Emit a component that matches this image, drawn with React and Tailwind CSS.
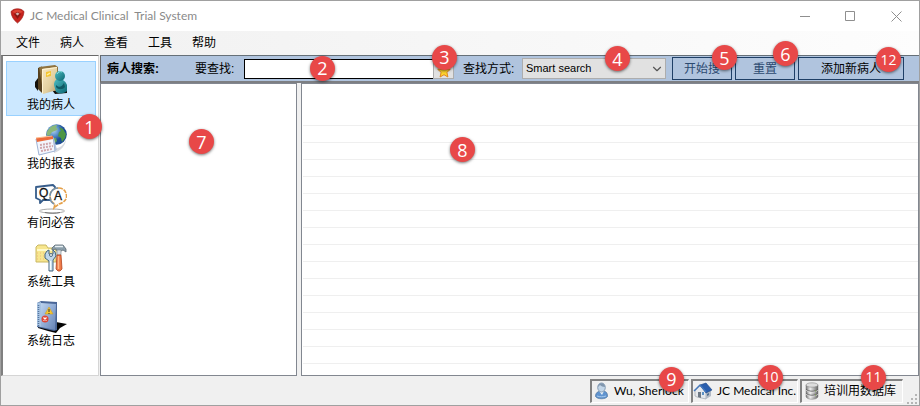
import React from 'react';
import { ChevronDown } from 'lucide-react';

const Badge = ({ n, className }) => (
    <span
        className={`absolute z-20 flex h-[25px] w-[25px] items-center justify-center rounded-full bg-[#e84848] font-['Open_Sans'] leading-none text-white shadow-[0_1px_3px_rgba(0,0,0,0.55)] pointer-events-none ${n > 9 ? 'text-sm' : 'text-lg'} ${className}`}
    >
        {n}
    </span>
);

const ShieldLogo = () => (
    <svg width="16" height="16" viewBox="0 0 16 16" aria-hidden="true">
        <path d="M2 3.500C4 1.500 6 .8 8.500.8S13 1.500 15 3.500c-.2 4.500-2.500 8.500-6.500 11.500C4.500 12 2.200 8 2 3.500z" fill="#c5221c" stroke="#9c1a15" strokeWidth=".7" />
        <path d="M3 4c2-1.800 3.500-2.300 5.500-2.300S12 2.200 14 4l-3 1-2.500-1L6 5z" fill="#dd4434" />
        <path d="m5 6 3.500-2L12 6l-3.500 5z" fill="#8c1813" />
        <path d="m6.500 5.800 2-1.200 2 1.200-2 1.600z" fill="#d3b5ae" />
    </svg>
);

const PatientsIcon = () => (
    <svg width="32" height="32" viewBox="0 0 32 32" aria-hidden="true">
        <defs>
            <linearGradient id="folder" x1="0" y1="0" x2="1" y2="1">
                <stop offset="0" stopColor="#f7e8c4" />
                <stop offset=".6" stopColor="#e2cf9f" />
                <stop offset="1" stopColor="#b39b6c" />
            </linearGradient>
            <linearGradient id="person" x1="0" y1="0" x2="1" y2="1">
                <stop offset="0" stopColor="#4dbcc2" />
                <stop offset="1" stopColor="#0b6672" />
            </linearGradient>
        </defs>
        <path d="M0 17 3 13v13l-3-4zM17 25l11-2 4 2v3l-12 1z" fill="#14110b" />
        <path d="M3 3 7 1.500V28l-4-4z" fill="#56401f" />
        <path d="M4 2 20 0l3 2v24H8z" fill="#8f733f" />
        <path d="m7 4 15-2v23L8 29z" fill="url(#folder)" />
        <path d="M7 4v24l1 1V5l14-2V2z" fill="#fff3d2" />
        <path d="m11 7 5-1v5l-5 1z" fill="#f4c431" />
        <path d="m12 10 3-2" stroke="#fff1a0" strokeWidth="1.500" />
        <path d="M19 20c0-4 2-6 5-6 4 0 7 3 8 6v6c-3 3-8 3-11 1z" fill="url(#person)" />
        <path d="M21 20c3 3 6 2 8-2l1 4c-2 3-7 3-9 0z" fill="#0f5864" />
        <circle cx="25" cy="11" r="5" fill="url(#person)" />
        <path d="M22 9c1-2 3-3 5-2" stroke="#93e2df" fill="none" />
    </svg>
);

const ReportsIcon = () => (
    <svg width="32" height="32" viewBox="0 0 32 32" aria-hidden="true">
        <defs>
            <radialGradient id="globe" cx=".35" cy=".3">
                <stop offset="0" stopColor="#b8d4ee" />
                <stop offset=".5" stopColor="#5c93cc" />
                <stop offset="1" stopColor="#1c4d94" />
            </radialGradient>
        </defs>
        <path d="M19 25c6-1 10-4 12-10 0 6-5 12-12 14z" fill="#d8dbe1" />
        <circle cx="21.500" cy="10.500" r="10.300" fill="url(#globe)" />
        <path d="M14 5c2-3 5-4 8-4l-1 3 2 1-3 2-3 1-2 3-3 1c-1-3 0-5 2-7z" fill="#8ab879" />
        <path d="m24 3 4 2 3 5-1 4-3 4-1-4-3-2 1-4 2-1z" fill="#4d9644" />
        <path d="M17 14h4l1 3-3 3z" fill="#64a357" />
        <path d="m3 17 16-3 3 12-18 5z" fill="#b6c5de" />
        <path d="m1 15 17-2 2 14-16 4z" fill="#f3f6fd" stroke="#9fb3d4" />
        <path d="m1 14 17-2v3L2 18z" fill="#ed6a3b" />
        <path d="m1 14 16-2" stroke="#ffbd8f" />
        <path d="m5 21 12-2M5 24l13-2M6 27l11-2" stroke="#d0a6ac" strokeWidth="2" strokeDasharray="2 1" />
    </svg>
);

const QaIcon = () => (
    <svg width="32" height="32" viewBox="0 0 32 32" aria-hidden="true">
        <ellipse cx="17" cy="28" rx="12.500" ry="2" fill="#fff" stroke="#a9a9a9" />
        <path d="M10 29.500c5 1 11 1 15 0" fill="none" stroke="#777" />
        <path d="m1 4 17-2 2 2-1 13H8l-3 3v-3l-4-2z" fill="#fff" stroke="#375d8b" strokeWidth="1.800" strokeLinejoin="round" />
        <path d="M24 5c4 0 7 3 7.500 7.500S28 20 24 21l-5 4 1-4c-3-1-5-5-5-8.500C15 8 19 5 24 5z" fill="#fff" stroke="#e5a14a" strokeWidth="1.600" strokeDasharray="4 1" />
        <path d="M15 13c0-5 4-8 8-8M15 14c0 3 2 6 4 7" fill="none" stroke="#7291ad" strokeWidth="1.500" />
        <text x="4" y="14" fontSize="12" fontFamily="Liberation Sans, sans-serif" fill="#111" stroke="#111" strokeWidth=".3">Q</text>
        <text x="19" y="17" fontSize="12" fontFamily="Liberation Sans, sans-serif" fill="#111" stroke="#111" strokeWidth=".3">A</text>
    </svg>
);

const ToolsIcon = () => (
    <svg width="32" height="32" viewBox="0 0 32 32" aria-hidden="true">
        <path d="m1 5 2-2h8l2 3h8v14H1z" fill="#f7e68e" stroke="#c9b763" />
        <path d="M2 7h18v2H2z" fill="#fffac9" />
        <path d="M2 11h17M2 14h10M2 17h9" stroke="#f0b77a" strokeDasharray="1 2" />
        <path d="m17 6 3-3h8l3 4v3l-3-2-2 1h-4l-1-2-4 1z" fill="#8b9eaa" stroke="#5a6872" strokeWidth=".8" />
        <path d="M20 4.500h8" stroke="#e9f0f4" strokeWidth="1.500" />
        <path d="M22 8h4v5h-4z" fill="#d7dde1" stroke="#77838b" strokeWidth=".6" />
        <path d="M22 13h4l1 14-2 2h-2l-2-2z" fill="#ee7a48" stroke="#b2431c" strokeWidth=".8" />
        <path d="M23.500 14v13" stroke="#ffb98a" strokeWidth="1.500" />
        <path d="m12 9 2-1v4l2 1 2-1V8l2 2 1 4-3 4v11h-4V19l-4-3v-4z" fill="#bfd7ea" stroke="#44657f" />
        <circle cx="16" cy="13" r="1.500" fill="#fffdf0" stroke="#516d84" />
        <path d="M15.500 19v9" stroke="#f5fcff" strokeWidth="1.500" />
    </svg>
);

const LogIcon = () => (
    <svg width="32" height="32" viewBox="0 0 32 32" aria-hidden="true">
        <defs>
            <linearGradient id="book" x1="0" y1="0" x2="1" y2="1">
                <stop offset="0" stopColor="#bdd3ee" />
                <stop offset=".5" stopColor="#8fabd5" />
                <stop offset="1" stopColor="#6481b3" />
            </linearGradient>
        </defs>
        <path d="m3 25 18-4 11 2-7 4-4 5-8-2-10-3z" fill="#050505" />
        <path d="m2 2 4-2 16 1v28l-3 1-17-4z" fill="#4a6798" />
        <path d="m6 2 15 1-1 26-14-3z" fill="url(#book)" />
        <path d="m2 2 4-1v25l-4-1z" fill="#a7c3e2" />
        <path d="M3.500 4v22" stroke="#56769f" strokeWidth="1.500" strokeDasharray="1 1" />
        <path d="m14 6 4 7h-8z" fill="#f6c82e" stroke="#cb9a2c" strokeWidth=".6" />
        <path d="M14 8v3M14 12v1" stroke="#333" />
        <circle cx="10" cy="18" r="3.500" fill="#df4535" />
        <path d="m8.500 16.500 3 3m0-3-3 3" stroke="#fff" strokeWidth="1.200" />
    </svg>
);

const StarIcon = () => (
    <svg width="14" height="14" viewBox="0 0 14 14" aria-hidden="true">
        <path d="m7 .8 1.800 4 4.500.5-3.400 3 1 4.700L7 10.700 3.100 13l1-4.700-3.400-3 4.500-.5z" fill="#ffd52c" stroke="#df8620" strokeLinejoin="round" />
    </svg>
);

const UserIcon = () => (
    <svg width="16" height="18" viewBox="0 0 16 18" aria-hidden="true">
        <path d="M1.500 14.500C1.500 10.500 4 9 8 9s5.500 1.500 5.500 5.500c-2 3-10 3-12 0z" fill="#5f93cf" stroke="#4c719b" strokeWidth=".7" />
        <path d="m5 9 3 4 2-4z" fill="#edf5fb" />
        <ellipse cx="7.500" cy="5.500" rx="3.800" ry="4.500" fill="#c3d6e8" stroke="#718ca7" strokeWidth=".8" />
        <path d="M4 5c0-5 7-5 7 0-2 0-4-1-5-2z" fill="#8196ad" />
        <path d="M3 14c3 1 6 1 9 0" stroke="#a9cbed" fill="none" />
    </svg>
);

const HouseIcon = () => (
    <svg width="20" height="18" viewBox="0 0 20 18" aria-hidden="true">
        <path d="m2 9 5-5 6 6v7l-9-2-2-1z" fill="#e6e9ed" stroke="#9099a3" strokeWidth=".6" />
        <path d="m13 10 5-2v6l-5 3z" fill="#b2bac5" />
        <path d="m7 3 6-2 6 7-6 3z" fill="#2b5fae" stroke="#1b4585" strokeWidth=".6" />
        <path d="M1 9 7 3l6 7" fill="none" stroke="#4478bd" strokeWidth="1.400" />
        <path d="M5 10h3v6l-3-1z" fill="#6e7884" />
        <path d="M9 10h2v3H9z" fill="#5b91c5" />
        <path d="m14 12 2-1v2l-2 1z" fill="#54718e" />
    </svg>
);

const DatabaseIcon = () => (
    <svg width="16" height="18" viewBox="0 0 16 18" aria-hidden="true">
        <defs>
            <linearGradient id="metal">
                <stop offset="0" stopColor="#777" />
                <stop offset=".35" stopColor="#eee" />
                <stop offset="1" stopColor="#666" />
            </linearGradient>
        </defs>
        <path d="M2 3v12c2 3 10 3 12 0V3z" fill="url(#metal)" stroke="#777" strokeWidth=".5" />
        <ellipse cx="8" cy="3" rx="6" ry="2.200" fill="#ddd" stroke="#888" strokeWidth=".6" />
        <path d="M2 7c2 3 10 3 12 0M2 11c2 3 10 3 12 0" fill="none" stroke="#666" />
        <path d="M2 8c2 3 10 3 12 0M2 12c2 3 10 3 12 0" fill="none" stroke="#eee" strokeWidth=".6" />
        <path d="M11 9h1M11 13h1" stroke="#7fa74f" />
    </svg>
);

const menus = ['文件', '病人', '查看', '工具', '帮助'];

const sections = [
    { label: '我的病人', icon: PatientsIcon, active: true },
    { label: '我的报表', icon: ReportsIcon },
    { label: '有问必答', icon: QaIcon },
    { label: '系统工具', icon: ToolsIcon },
    { label: '系统日志', icon: LogIcon },
];

const rows = Array.from({ length: 15 }, (_, i) => i);

const TitleBar = () => (
    <header className="flex h-[30px] items-center bg-white pl-2">
        <ShieldLogo />
        <h1 className="ml-[5px] whitespace-pre font-['Lato'] text-xs text-[#8a8a8a]">JC Medical Clinical  Trial System</h1>
        <div className="ml-auto flex h-full text-[#8f8f8f]">
            <button type="button" aria-label="Minimize" className="flex w-[45px] items-center justify-center">
                <svg width="11" height="11" viewBox="0 0 11 11"><path d="M0 5.500h10" stroke="currentColor" /></svg>
            </button>
            <button type="button" aria-label="Maximize" className="flex w-[45px] items-center justify-center">
                <svg width="11" height="11" viewBox="0 0 11 11"><path d="M.5.500h9v9h-9z" fill="none" stroke="currentColor" /></svg>
            </button>
            <button type="button" aria-label="Close" className="flex w-[46px] items-center justify-center">
                <svg width="11" height="11" viewBox="0 0 11 11"><path d="m.5.500 10 10m0-10-10 10" stroke="currentColor" /></svg>
            </button>
        </div>
    </header>
);

const Sidebar = () => (
    <aside className="relative mr-px flex w-[98px] shrink-0 flex-col gap-1 border-t border-r border-b border-l-2 border-t-[#696969] border-r-[#d5d5d5] border-b-[#d5d5d5] border-l-[#808080] bg-white pt-[5px] pr-0.5 pl-[3px]">
        {sections.map(({ label, icon: Icon, active }) => (
            <button
                key={label}
                type="button"
                className={`flex h-[55px] flex-col items-center border pt-[3px] leading-4 ${active ? 'border-[#99d1ff] bg-[#cce8ff]' : 'border-transparent'}`}
            >
                <Icon />
                {label}
            </button>
        ))}
        <Badge n={1} className="top-[58px] -right-1" />
    </aside>
);

const SearchBar = () => (
    <form
        className="flex h-7 shrink-0 items-center border-t border-b-2 border-l border-t-[#667078] border-b-[#7d7f83] border-l-[#696969] bg-[#b0c4de] pl-[6px]"
        onSubmit={(e) => e.preventDefault()}
    >
        <strong className="w-[88px]">病人搜索:</strong>
        <label htmlFor="term" className="w-[49px]">要查找:</label>
        <div className="relative w-[189px]">
            <input id="term" type="text" className="block h-5 w-full border border-r-0 border-black bg-white px-1 outline-none" />
            <Badge n={2} className="-top-[3px] left-[66px]" />
        </div>
        <div className="relative">
            <button type="button" aria-label="Favorites" className="flex h-5 w-[21px] items-center justify-center border border-[#adadad] bg-[#e1e1e1] pt-1">
                <StarIcon />
            </button>
            <Badge n={3} className="-top-[14px] -left-px" />
        </div>
        <label htmlFor="mode" className="ml-[9px] w-[59px]">查找方式:</label>
        <div className="relative w-36">
            <select id="mode" className="block h-[21px] w-full appearance-none border border-[#adadad] bg-[#e1e1e1] px-[3px] font-['Liberation_Sans'] text-[11px] outline-none">
                <option>Smart search</option>
            </select>
            <ChevronDown size={14} strokeWidth={2} className="pointer-events-none absolute top-1 right-0.5 text-[#555]" />
            <Badge n={4} className="-top-3 left-[83px]" />
        </div>
        <div className="relative ml-1.5">
            <button type="submit" className="block h-[23px] w-[60px] border border-[#1f3f66] text-[#2c4a70]">开始搜</button>
            <Badge n={5} className="-top-3 left-10" />
        </div>
        <div className="relative ml-[3px]">
            <button type="reset" className="block h-[23px] w-[60px] border border-[#1f3f66] text-[#2c4a70]">重置</button>
            <Badge n={6} className="-top-4 left-[38px]" />
        </div>
        <div className="relative ml-[3px]">
            <button type="button" className="block h-[23px] w-[106px] border border-[#1f3f66]">添加新病人</button>
            <Badge n={12} className="-top-[10px] left-[78px]" />
        </div>
    </form>
);

const Panes = () => (
    <div className="flex min-h-0 flex-1 gap-1">
        <section className="relative w-[197px] shrink-0 border border-[#828790] bg-white">
            <Badge n={7} className="top-[45px] left-[88px]" />
        </section>
        <section className="relative flex-1 border border-[#828790] bg-white pt-[25px] pl-px">
            {rows.map((i) => (
                <div key={i} className="h-[17px] border-b border-[#efefef]" />
            ))}
            <Badge n={8} className="top-[53px] left-[148px]" />
        </section>
    </div>
);

const StatusPanel = ({ icon: Icon, label, className, children }) => (
    <div className={`relative flex h-6 items-center border-t-2 border-r border-b border-l-2 border-t-[#828282] border-r-white border-b-white border-l-[#828282] ${className}`}>
        <Icon />
        <span className="ml-1 whitespace-nowrap">{label}</span>
        {children}
    </div>
);

const StatusBar = () => (
    <footer className="flex h-[29px] shrink-0 items-center justify-end gap-0.5 bg-[#f0f0f0] font-['Lato','Noto_Sans_CJK_SC',sans-serif]">
        <StatusPanel icon={UserIcon} label="Wu, Sherlock" className="w-[99px] pl-0.5">
            <Badge n={9} className="-top-[14px] left-[67px]" />
        </StatusPanel>
        <StatusPanel icon={HouseIcon} label="JC Medical Inc." className="w-[107px]">
            <Badge n={10} className="-top-4 left-[65px]" />
        </StatusPanel>
        <StatusPanel icon={DatabaseIcon} label="培训用数据库" className="w-[103px] pl-0.5">
            <Badge n={11} className="-top-4 left-[59px]" />
        </StatusPanel>
        <svg width="14" height="14" viewBox="0 0 14 14" className="self-end" aria-hidden="true">
            <path d="M10 3h2v2h-2zM6 7h2v2H6zM10 7h2v2h-2zM2 11h2v2H2zM6 11h2v2H6zM10 11h2v2h-2z" fill="#b5b5b5" />
        </svg>
    </footer>
);

const App = () => {
    return (
        <div className="flex min-h-screen flex-col border border-[#a0a0a0] bg-[#f0f0f0] font-['Liberation_Sans','Noto_Sans_CJK_SC',sans-serif] text-xs text-black">
            <TitleBar />
            <nav className="flex h-6 shrink-0 items-center bg-linear-to-r from-[#f0f0f0] to-[#fdfdfd] pl-[5px]">
                {menus.map((name) => (
                    <button key={name} type="button" className="px-2.5">{name}</button>
                ))}
            </nav>
            <main className="flex flex-1">
                <Sidebar />
                <div className="flex min-w-0 flex-1 flex-col">
                    <SearchBar />
                    <Panes />
                </div>
            </main>
            <StatusBar />
        </div>
    );
};

export default App;
